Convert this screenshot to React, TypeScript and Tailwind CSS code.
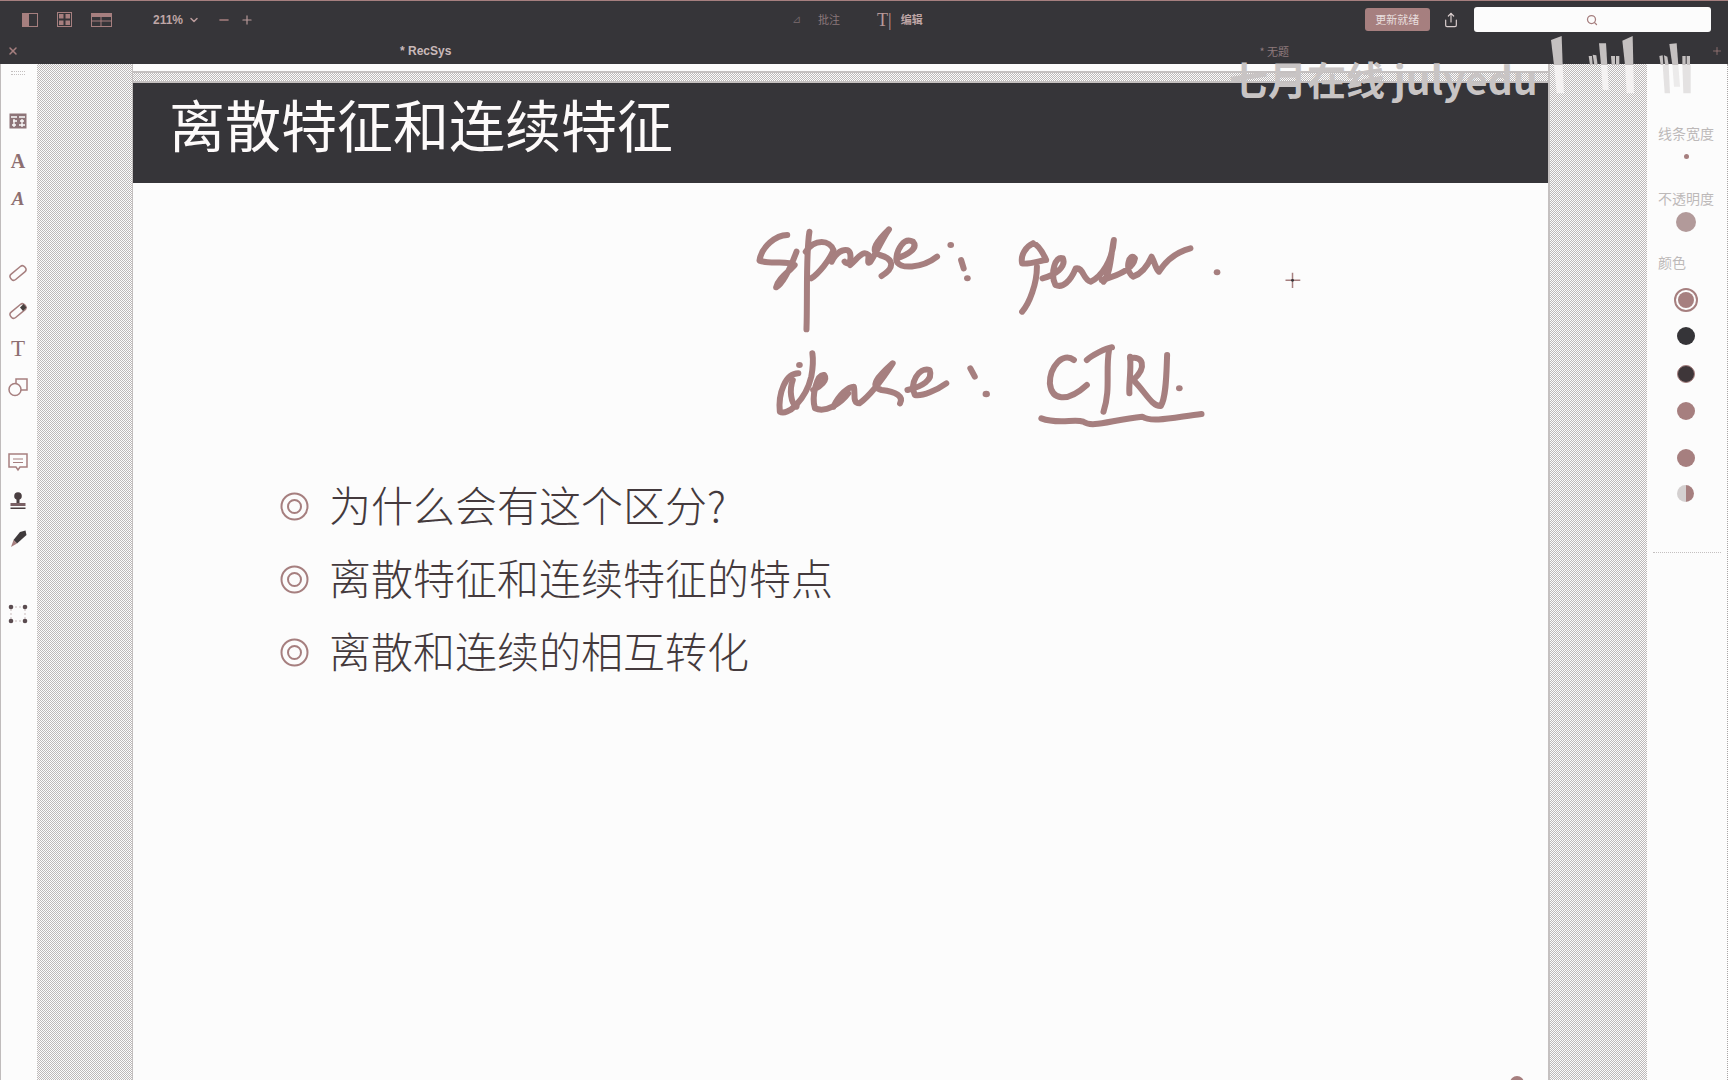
import { ChevronDown, Minus, Plus, Search, Share, X } from "lucide-react";

const INK = "#a67f7f";

const strokes = [
  "M125 75 C95 75 55 110 50 152 C80 165 125 150 145 165 C130 185 100 205 95 232 C115 220 135 170 150 125",
  "M185 65 C175 130 180 260 177 358",
  "M175 125 C200 85 240 90 250 120 C240 150 210 190 190 205",
  "M245 155 C260 120 290 110 295 130 C300 160 285 165 280 155",
  "M295 165 C320 140 330 120 345 135 C345 150 340 165 350 155 C370 120 385 80 400 58 C370 90 345 125 375 135 C410 145 420 170 380 198",
  "M420 145 C450 135 480 115 465 95 C440 80 420 120 420 150 C425 180 490 175 530 140",
  "M790 100 C770 110 755 135 760 160 C775 165 815 150 825 150 C815 125 805 105 790 100",
  "M800 170 C800 220 780 280 760 305",
  "M815 205 C850 195 880 170 870 145 C850 135 835 190 850 225 C870 235 890 215 905 175 C925 170 925 210 945 215 C975 200 1005 150 1008 90 C1000 130 1000 190 980 215",
  "M975 210 C1010 200 1060 180 1065 145 C1050 125 1035 180 1060 200 C1085 190 1100 165 1110 140 C1120 160 1120 175 1130 185 C1150 150 1180 125 1215 115",
  "M155 490 C120 490 100 550 105 605 C125 620 175 570 190 500 C195 470 195 445 193 430",
  "M140 510 C130 540 135 580 150 590",
  "M195 540 C215 530 235 510 225 495 C205 490 190 560 200 595 C230 610 270 580 290 550",
  "M250 590 C265 555 290 530 305 530 C310 550 300 580 320 580 C345 560 375 520 410 460 C370 500 345 530 380 540 C420 545 440 560 430 580",
  "M450 540 C490 530 520 510 510 480 C480 470 455 520 470 555 C490 560 530 540 555 520",
  "M900 450 C870 425 835 470 835 520 C840 570 880 580 935 525",
  "M935 450 C950 435 985 415 1003 412",
  "M995 420 C985 480 1000 540 980 605",
  "M1052 440 C1055 490 1048 520 1050 550",
  "M1052 445 C1085 435 1100 470 1060 510 C1090 540 1110 590 1135 588 C1150 560 1150 490 1152 435",
  "M812 625 C860 645 900 625 925 635 C950 655 1000 630 1085 620 C1110 640 1180 620 1245 612",
  "M620 475 L632 500",
  "M595 150 L602 175",
];
const dots: [number, number, number][] = [
  [567, 105, 9], [612, 205, 9], [1287, 187, 9], [158, 465, 9], [663, 552, 10], [1185, 535, 9],
];

function Handwriting() {
  return (
    <svg viewBox="0 0 1568 690" preserveAspectRatio="none" className="absolute left-[608px] top-[146px] h-[230px] w-[580px]">
      {strokes.map((d) => (
        <path key={d} d={d} fill="none" stroke={INK} strokeWidth={6} strokeLinecap="round" strokeLinejoin="round" vectorEffect="non-scaling-stroke" />
      ))}
      {dots.map(([x, y, r]) => (
        <ellipse key={x} cx={x} cy={y} rx={r} ry={r} fill={INK} />
      ))}
      <path d="M1491 188V234M1472 211H1512" stroke={INK} strokeWidth={1.5} vectorEffect="non-scaling-stroke" />
      <circle cx="1491" cy="211" r="4" fill="#363539" />
    </svg>
  );
}

function Bullet() {
  return (
    <svg width="29" height="29" viewBox="0 0 29 29" fill="none" stroke={INK} strokeWidth="2" className="shrink-0">
      <circle cx="14.5" cy="14.5" r="13" />
      <circle cx="14.5" cy="14.5" r="6.5" />
    </svg>
  );
}

function LogoBars() {
  const bars = [
    "63,30 95,18 98,105 72,105", "207,40 228,40 232,105 213,105", "277,32 308,18 310,105 285,105",
    "418,42 440,40 445,105 427,105", "176,78 186,78 188,105 180,105", "188,74 199,76 203,105 193,105",
    "243,78 255,78 255,105 245,105", "258,78 268,78 268,105 258,105", "388,78 398,76 400,105 392,105",
    "402,76 412,80 416,105 405,105", "457,78 467,78 467,105 457,105", "470,78 480,78 480,105 470,105",
  ];
  const lower = [
    ["72,105 98,105 102,190 80,190", "#f4f2f2"], ["213,105 232,105 236,180 218,180", "#f4f2f2"],
    ["285,105 310,105 312,190 290,190", "#f4f2f2"], ["398,105 416,105 420,190 404,190", "#e4e2e2"],
    ["427,105 445,105 450,170 432,170", "#ecebeb"], ["457,105 482,105 482,190 460,190", "#e4e2e2"],
  ];
  return (
    <svg viewBox="0 0 594 240" className="pointer-events-none absolute left-[1530px] top-[30px] h-[80px] w-[198px]">
      {lower.map(([p, c]) => <polygon key={p} points={p} fill={c} />)}
      {bars.map((p) => <polygon key={p} points={p} fill="#c4c0c0" />)}
    </svg>
  );
}

function ToolIcon({ kind }: { kind: string }) {
  const s = { fill: "none", stroke: INK, strokeWidth: 1.5 };
  if (kind === "style")
    return (
      <svg width="18" height="16" viewBox="0 0 18 16">
        <rect x="0.5" y="0.5" width="17" height="15" fill="#8d7478" />
        <path d="M2 4H8M10 4H16M4 8H8M11 8H15M3 12H7M10 12L16 12M5 6V14M13 6V14" stroke="#fcfcfc" strokeWidth="1.3" />
      </svg>
    );
  if (kind === "a1") return <span className="font-['Liberation_Serif'] text-[20px] font-bold leading-none text-[#8d6f72]">A</span>;
  if (kind === "a2") return <span className="font-['Liberation_Serif'] text-[19px] font-bold italic leading-none text-[#8d6f72]">A</span>;
  if (kind === "t") return <span className="font-['Liberation_Serif'] text-[23px] leading-none text-[#8d6f72]">T</span>;
  if (kind === "pencil")
    return (
      <svg width="20" height="20" viewBox="0 0 20 20">
        <rect x="1" y="6.5" width="18" height="7" rx="3" transform="rotate(-40 10 10)" {...s} />
      </svg>
    );
  if (kind === "eraser")
    return (
      <svg width="20" height="20" viewBox="0 0 20 20">
        <rect x="1" y="6.5" width="18" height="7" rx="3" transform="rotate(-40 10 10)" {...s} />
        <path d="M12 6.5L15.5 3L18.5 6.5L15 10Z" fill="#47403f" />
      </svg>
    );
  if (kind === "shapes")
    return (
      <svg width="20" height="20" viewBox="0 0 20 20">
        <rect x="8" y="2" width="11" height="11" {...s} />
        <circle cx="7" cy="12.5" r="6" fill="#fcfcfc" stroke={INK} strokeWidth="1.5" />
      </svg>
    );
  if (kind === "note")
    return (
      <svg width="20" height="20" viewBox="0 0 20 20">
        <path d="M1 2H19V15H12L10 18L8 15H1Z" {...s} />
        <path d="M5 7H15M5 10.5H15" stroke={INK} strokeWidth="1" />
      </svg>
    );
  if (kind === "stamp")
    return (
      <svg width="20" height="20" viewBox="0 0 20 20">
        <circle cx="10" cy="5" r="3.8" fill="#4a3f41" />
        <path d="M8.5 8H11.5V12H8.5Z" fill="#4a3f41" />
        <rect x="2.5" y="12" width="15" height="3" fill="#7a6165" />
        <rect x="2.5" y="16.5" width="15" height="1.5" fill="#4a3f41" />
      </svg>
    );
  if (kind === "pen")
    return (
      <svg width="20" height="20" viewBox="0 0 20 20">
        <path d="M12 3L17.5 1.5L18.5 6L9 14.5L5.5 11Z" fill="#3f3a3c" />
        <path d="M5.5 11L9 14.5L3 18Z" fill={INK} />
      </svg>
    );
  return (
    <svg width="20" height="20" viewBox="0 0 20 20">
      <rect x="3" y="3" width="14" height="14" fill="none" stroke="#c9bcbc" strokeWidth="1" strokeDasharray="2 2" />
      <circle cx="3" cy="3" r="2.3" fill="#5b4c50" /><circle cx="17" cy="3" r="2.3" fill="#5b4c50" />
      <circle cx="3" cy="17" r="2.3" fill="#5b4c50" /><circle cx="17" cy="17" r="2.3" fill="#5b4c50" />
    </svg>
  );
}

function LeftBar() {
  const Item = ({ kind, className }: { kind: string; className: string }) => (
    <div className={`flex h-5 items-center justify-center ${className}`}><ToolIcon kind={kind} /></div>
  );
  return (
    <aside className="flex w-[37px] shrink-0 flex-col items-center border-l border-[#c0bcbc] bg-[#fcfcfc] pt-[7px] pr-[2px]">
      <div className="h-[4px] w-[14px] border-y border-dotted border-[#c4c0c0]" />
      <Item kind="style" className="mt-[36px]" />
      <Item kind="a1" className="mt-[20px]" />
      <Item kind="a2" className="mt-[17px]" />
      <Item kind="pencil" className="mt-[55px]" />
      <Item kind="eraser" className="mt-[18px]" />
      <Item kind="t" className="mt-[17px]" />
      <Item kind="shapes" className="mt-[19px]" />
      <Item kind="note" className="mt-[55px]" />
      <Item kind="stamp" className="mt-[19px]" />
      <Item kind="pen" className="mt-[18px]" />
      <Item kind="select" className="mt-[55px]" />
    </aside>
  );
}

function RightBar() {
  return (
    <aside className="flex w-[81px] shrink-0 flex-col border-r border-dotted border-[#a9a5a5] bg-[#fcfcfc] font-['Noto_Sans_CJK_SC',sans-serif]">
      <div className="ml-[11px] mt-[59px] text-[14px] leading-5 text-[#bdb9b9]">线条宽度</div>
      <div className="ml-[37px] mt-[11px] h-[5px] w-[5px] rounded-full bg-[#a67f7f]" />
      <div className="ml-[11px] mt-[29px] text-[14px] leading-5 text-[#bdb9b9]">不透明度</div>
      <div className="ml-[29px] mt-[4px] h-5 w-5 rounded-full bg-[#b29a9a]" />
      <div className="ml-[11px] mt-[20px] text-[14px] leading-5 text-[#bdb9b9]">颜色</div>
      <div className="ml-[27px] mt-[16px] flex h-6 w-6 items-center justify-center rounded-full border-2 border-[#a67f7f]">
        <div className="h-[16px] w-[16px] rounded-full bg-[#a67f7f]" />
      </div>
      <div className="ml-[30px] mt-[15px] h-[18px] w-[18px] rounded-full bg-[#353438]" />
      <div className="ml-[30px] mt-[20px] h-[18px] w-[18px] rounded-full border border-[#a67f7f] bg-[#3e3639]" />
      <div className="ml-[30px] mt-[19px] h-[18px] w-[18px] rounded-full bg-[#a67f7f]" />
      <div className="ml-[30px] mt-[29px] h-[18px] w-[18px] rounded-full bg-[#a67f7f]" />
      <div className="ml-[30px] mt-[18px] h-[17px] w-[17px] rounded-full bg-[linear-gradient(90deg,#d4d0d0_55%,#a67f7f_55%)]" />
      <div className="mx-[6px] mt-[50px] border-t border-dotted border-[#c4c0c0]" />
    </aside>
  );
}

const dither = "bg-[image:repeating-conic-gradient(#bdb9b9_0_25%,#fcfcfc_0_50%)] bg-[size:2px_2px]";

export default function App() {
  return (
    <div className="relative flex h-screen w-full flex-col overflow-hidden bg-[#fcfcfc] font-['Liberation_Sans',sans-serif]">
      <header className="h-[64px] shrink-0 border-t border-[#a67f7f] bg-[#363539] text-[#b99a9a]">
        <div className="flex h-[37px] items-center">
          <svg width="16" height="14" viewBox="0 0 16 14" className="ml-[22px]">
            <rect x="0.5" y="0.5" width="15" height="13" fill="none" stroke={INK} />
            <rect x="1" y="1" width="6" height="12" fill={INK} />
          </svg>
          <svg width="15" height="15" viewBox="0 0 15 15" className="ml-[19px]">
            <rect x="0.5" y="0.5" width="14" height="14" fill="none" stroke={INK} />
            <rect x="2" y="2" width="4.5" height="4.5" fill={INK} /><rect x="8.5" y="2" width="4.5" height="4.5" fill={INK} />
            <rect x="2" y="8.5" width="4.5" height="4.5" fill={INK} /><rect x="8.5" y="8.5" width="4.5" height="4.5" fill={INK} />
          </svg>
          <svg width="21" height="14" viewBox="0 0 21 14" className="ml-[19px]">
            <rect x="0.5" y="0.5" width="20" height="13" fill="none" stroke={INK} />
            <rect x="1" y="1" width="19" height="3" fill={INK} />
            <path d="M1 8H20M10 4V13" stroke={INK} />
          </svg>
          <span className="ml-[41px] text-[12px] font-bold text-[#bfa6a6]">211%</span>
          <ChevronDown size={12} strokeWidth={3} className="ml-[5px] text-[#b99a9a]" />
          <Minus size={14} strokeWidth={2.5} className="ml-[17px] text-[#a67f7f]" />
          <Plus size={14} strokeWidth={2} className="ml-[9px] text-[#b99a9a]" />
          <span className="ml-[538px] text-[11px] text-[#6f6266]">⊿</span>
          <span className="ml-[17px] font-['Noto_Sans_CJK_SC',sans-serif] text-[11px] text-[#8b787b]">批注</span>
          <span className="ml-[37px] font-['Liberation_Serif'] text-[18px] leading-none text-[#b99a9a]">T|</span>
          <span className="ml-[9px] font-['Noto_Sans_CJK_SC',sans-serif] text-[11px] font-bold text-[#bfa6a6]">编辑</span>
          <span className="ml-[442px] flex h-[23px] w-[65px] items-center justify-center rounded-[3px] bg-[#a67f7f] font-['Noto_Sans_CJK_SC',sans-serif] text-[11px] text-[#e8dede]">更新就绪</span>
          <Share size={16} strokeWidth={1.8} className="ml-[13px] text-[#d8cccc]" />
          <div className="ml-[15px] flex h-[25px] w-[237px] items-center justify-center rounded-[3px] bg-[#fcfcfc]">
            <Search size={12} strokeWidth={2.5} className="text-[#a67f7f]" />
          </div>
        </div>
        <div className="flex h-[26px] items-center">
          <X size={12} strokeWidth={3} className="ml-[7px] text-[#a67f7f]" />
          <span className="ml-[381px] text-[12px] font-bold text-[#c9b9b9]">* RecSys</span>
          <span className="ml-[808px] font-['Noto_Sans_CJK_SC',sans-serif] text-[11px] text-[#8f7a7d]">* 无题</span>
          <Plus size={12} strokeWidth={1.5} className="ml-[422px] text-[#a67f7f]" />
        </div>
      </header>

      <main className="flex min-h-0 flex-1">
        <LeftBar />
        <div className={`w-[95px] shrink-0 ${dither}`} />
        <section className="relative w-[1418px] shrink-0 border-l border-r-2 border-[#c4c0c0] bg-[#fcfcfc] font-['Noto_Sans_CJK_SC',sans-serif]">
          <div className="h-[7px] bg-[#fcfcfc]" />
          <div className={`h-[12px] border-y-2 border-[#c4c0c0] ${dither}`} />
          <div className="flex h-[100px] items-center bg-[#363539] pb-[20px] pl-[36px]">
            <h1 className="text-[56px] font-normal leading-none text-[#fdfafa]">离散特征和连续特征</h1>
          </div>
          <ul className="flex flex-col pl-[147px] pt-[287px]">
            {["为什么会有这个区分?", "离散特征和连续特征的特点", "离散和连续的相互转化"].map((t) => (
              <li key={t} className="flex h-[73px] items-center gap-[20px]">
                <Bullet />
                <span className="pb-[6px] text-[42px] font-light leading-none text-[#443a3d]">{t}</span>
              </li>
            ))}
          </ul>
          <Handwriting />
        </section>
        <div className={`w-[97px] shrink-0 ${dither}`} />
        <RightBar />
      </main>

      <div className="pointer-events-none absolute left-[1229px] top-[58px] whitespace-nowrap font-['Noto_Sans_CJK_SC',sans-serif] text-[39px] font-bold leading-[40px] text-[#c8c4c4]">七月在线 julyedu</div>
      <LogoBars />
      <div className="absolute left-[1510px] top-[1076px] h-[14px] w-[14px] rounded-full bg-[#a67f7f]" />
    </div>
  );
}
